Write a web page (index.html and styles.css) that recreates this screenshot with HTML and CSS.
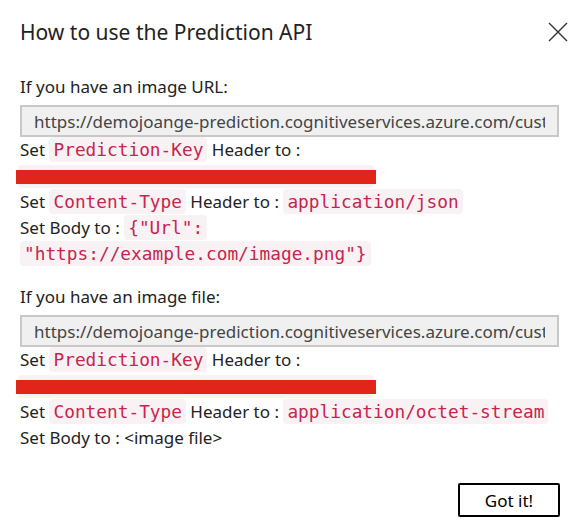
FILE: index.html
```html
<!DOCTYPE html>
<html>
<head>
<meta charset="utf-8">
<link rel="stylesheet" href="styles.css">
</head>
<body>
<div class="dialog">
  <div class="header">
    <h1 class="title">How to use the Prediction API</h1>
    <button class="close" aria-label="Close">
      <svg width="20" height="20" viewBox="0 0 20 20"><path d="M1 1 L19 19 M19 1 L1 19" stroke="#333" stroke-width="1.4" fill="none"/></svg>
    </button>
  </div>
  <div class="section">
    <div class="label">If you have an image URL:</div>
    <input class="urlbox" readonly value="https://demojoange-prediction.cognitiveservices.azure.com/customvision/v3.0/Prediction/classify/iterations/Iteration1/url">
    <div class="line">Set <code>Prediction-Key</code> Header to :</div>
    <div class="line keyline"><code class="key"><span class="keytext">00000000000000000000000000000000</span><span class="redact"></span></code></div>
    <div class="line">Set <code>Content-Type</code> Header to : <code>application/json</code></div>
    <div class="line">Set Body to : <code>{"Url":</code></div>
    <div class="line"><code>"https://example.com/image.png"}</code></div>
  </div>
  <div class="section second">
    <div class="label">If you have an image file:</div>
    <input class="urlbox" readonly value="https://demojoange-prediction.cognitiveservices.azure.com/customvision/v3.0/Prediction/classify/iterations/Iteration1/image">
    <div class="line">Set <code>Prediction-Key</code> Header to :</div>
    <div class="line keyline"><code class="key"><span class="keytext">00000000000000000000000000000000</span><span class="redact"></span></code></div>
    <div class="line">Set <code>Content-Type</code> Header to : <code>application/octet-stream</code></div>
    <div class="line">Set Body to : &lt;image file&gt;</div>
  </div>
  <div class="footer">
    <button class="gotit">Got it!</button>
  </div>
</div>
</body>
</html>
```
FILE: styles.css
```css
html, body {
  margin: 0;
  padding: 0;
  background: #fff;
}
body {
  font-family: "Noto Sans", "Open Sans", sans-serif;
  color: #222;
}
.dialog {
  width: 578px;
  height: 526px;
  box-sizing: border-box;
  padding: 18px 18px 0 20px;
}
.header {
  display: flex;
  justify-content: space-between;
  align-items: center;
  height: 28px;
}
.title {
  margin: 0;
  font-size: 21px;
  font-weight: 400;
  color: #222;
  line-height: 28px;
}
.close {
  border: none;
  background: none;
  padding: 0;
  width: 20px;
  height: 20px;
  display: flex;
  margin-right: -8px;
}
.section {
  margin-top: 28px;
}
.section.second {
  margin-top: 17px;
}
.label {
  font-size: 17px;
  line-height: 26px;
}
.urlbox {
  display: block;
  margin: 5px 0 0 0;
  width: 539px;
  box-sizing: border-box;
  height: 32px;
  background: #f0f0f0;
  border: 2px solid #c8c8c8;
  border-radius: 0;
  padding: 0 12px;
  font-family: "Noto Sans", "Open Sans", sans-serif;
  font-size: 17px;
  color: #444;
  outline: none;
}
.line {
  font-size: 17px;
  line-height: 26px;
  height: 26px;
  white-space: nowrap;
}
code {
  font-family: "DejaVu Sans Mono", monospace;
  font-size: 17.8px;
  color: #c7254e;
  background: #f9f2f4;
  border-radius: 4px;
  padding: 2px 4px;
}
.keyline {
  display: flex;
  align-items: center;
}
.key {
  position: relative;
  display: block;
  box-sizing: border-box;
  width: 356px;
  height: 23px;
  padding: 0 4px;
  line-height: 23px;
  margin-left: -2px;
  overflow: visible;
}
.keytext {
  color: #f9f2f4;
  font-size: 10px;
}
.redact {
  position: absolute;
  left: -2px;
  right: -2px;
  top: 5px;
  height: 14px;
  background: #e1251b;
}
.footer {
  display: flex;
  justify-content: flex-end;
  margin-top: 32px;
}
.gotit {
  width: 102px;
  height: 34px;
  background: #fff;
  border: 2px solid #000;
  border-radius: 2px;
  font-family: "Noto Sans", "Open Sans", sans-serif;
  font-size: 17px;
  color: #000;
  padding: 0;
}
```
